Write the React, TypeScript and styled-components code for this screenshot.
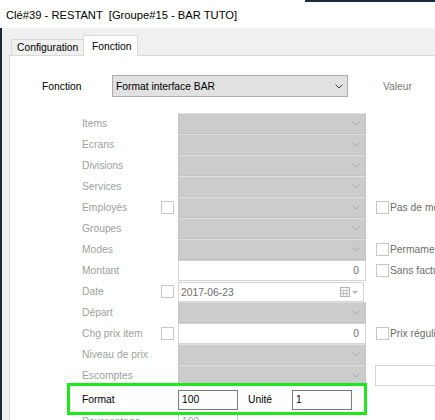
import React from "react";
import styled, { createGlobalStyle } from "styled-components";

const Global = createGlobalStyle`
  html, body { margin: 0; padding: 0; background: #f0f0f0; }
  body { font-family: "Liberation Sans", Arial, sans-serif; }
`;

const Window = styled.div`
  position: relative;
  width: 435px;
  height: 420px;
  overflow: hidden;
  display: flex;
  flex-direction: column;
  background: #f0f0f0;
`;

const TitleBar = styled.div`
  flex: none;
  height: 28px;
  box-sizing: border-box;
  padding: 2px 0 0 6px;
  display: flex;
  align-items: center;
  background: linear-gradient(#1e2c3c, #1e2c3c) no-repeat right top / 130px 2px, #ffffff;
  font-size: 11.2px;
  color: #000;
  white-space: pre;
`;

const Body = styled.div`
  flex: 1;
  display: flex;
  flex-direction: column;
  border-left: 2px solid #1b2838;
  padding: 7px 0 0 7px;
  min-height: 0;
`;

const TabStrip = styled.div`
  flex: none;
  display: flex;
  align-items: flex-end;
  height: 20px;
  padding-left: 2px;
  position: relative;
  z-index: 1;
`;

const Tab = styled.div<{ $active?: boolean }>`
  box-sizing: border-box;
  display: flex;
  align-items: center;
  font-size: 10.3px;
  color: #000;
  border: 1px solid #d9d9d9;
  border-bottom: none;
  ${(p) =>
    p.$active
      ? `height: 21px; margin-bottom: -1px; width: 55px; padding-left: 8px; background: #fff;`
      : `height: 16px; width: 72px; padding-left: 5px; background: #f0f0f0; border-right: none;`}
`;

const Panel = styled.div`
  flex: 1;
  background: #fff;
  border-top: 1px solid #d9d9d9;
  border-left: 1px solid #d9d9d9;
  display: flex;
  flex-direction: column;
  font-size: 10.3px;
  min-height: 0;
`;

const FonctionRow = styled.div`
  margin-top: 19px;
  padding-left: 32px;
  height: 22px;
  display: flex;
  align-items: center;
  white-space: nowrap;
`;

const FonctionLabel = styled.span`
  width: 70px;
  color: #000;
`;

const MainSelect = styled.div`
  box-sizing: border-box;
  width: 236px;
  height: 22px;
  background: #e1e1e1;
  border: 1px solid #adadad;
  display: flex;
  align-items: center;
  justify-content: space-between;
  padding: 0 4px 0 3px;
  color: #000;
`;

const Valeur = styled.span`
  margin-left: 35px;
  color: #7a7a7a;
`;

const Rows = styled.div`
  margin-top: 16px;
  padding-left: 72px;
  display: flex;
  flex-direction: column;
`;

const Row = styled.div<{ $top?: number }>`
  display: grid;
  grid-template-columns: 79px 17px 188px 10px 14px auto;
  height: 21px;
  align-items: center;
  white-space: nowrap;
  margin-top: ${(p) => p.$top ?? 0}px;
`;

const Label = styled.span<{ $on?: boolean }>`
  grid-column: 1;
  color: ${(p) => (p.$on ? "#000" : "#a0a0a0")};
`;

const Check = styled.span<{ $col: number }>`
  grid-column: ${(p) => p.$col};
  box-sizing: border-box;
  width: 13px;
  height: 13px;
  background: #fff;
  border: 1px solid #c6c6c6;
`;

const Combo = styled.div`
  grid-column: 3;
  align-self: stretch;
  box-sizing: border-box;
  background: #cccccc;
  border: 1px solid #c2c2c2;
  border-top-color: #dedede;
  display: flex;
  align-items: center;
  justify-content: flex-end;
  padding-right: 5px;
`;

const TextBox = styled.div`
  grid-column: 3;
  align-self: stretch;
  box-sizing: border-box;
  background: #fff;
  border: 1px solid #d4d4d4;
  display: flex;
  align-items: center;
  justify-content: flex-end;
  padding-right: 6px;
  color: #6d6d6d;
`;

const DateBox = styled.div`
  grid-column: 3;
  align-self: stretch;
  margin: 1px 2px 0 0;
  box-sizing: border-box;
  background: #fff;
  border: 1px solid #d4d4d4;
  display: flex;
  align-items: center;
  justify-content: space-between;
  padding: 0 4px 0 2px;
  color: #6d6d6d;
`;

const RightText = styled.span`
  grid-column: 6;
  color: #6d6d6d;
  overflow: hidden;
`;

const RightBox = styled.div`
  grid-column: 5 / 7;
  align-self: stretch;
  margin-left: -1px;
  width: 80px;
  box-sizing: border-box;
  background: #fff;
  border: 1px solid #d4d4d4;
`;

const FieldGroup = styled.div`
  grid-column: 3 / 7;
  display: flex;
  align-items: center;
`;

const EditBox = styled.div<{ $dim?: boolean }>`
  box-sizing: border-box;
  width: 60px;
  height: 20px;
  background: #fff;
  border: 1px solid ${(p) => (p.$dim ? "#cfcfcf" : "#7a7a7a")};
  display: flex;
  align-items: center;
  padding-left: 3px;
  color: ${(p) => (p.$dim ? "#a0a0a0" : "#000")};
`;

const InlineLabel = styled.span`
  width: 44px;
  margin-left: 10px;
  color: #000;
`;

const Highlight = styled.div`
  position: absolute;
  left: 67px;
  top: 383px;
  width: 300px;
  height: 32px;
  box-sizing: border-box;
  border: 3px solid #1de81d;
  pointer-events: none;
`;

const Chevron = ({ color }: { color: string }) => (
  <svg width="8" height="5" viewBox="0 0 8 5">
    <polyline points="0.5,0.5 4,4 7.5,0.5" fill="none" stroke={color} strokeWidth="1" />
  </svg>
);

const CalendarIcon = () => (
  <svg width="19" height="10" viewBox="0 0 19 10">
    <rect x="0.5" y="0.5" width="9" height="9" fill="#f4f4f4" stroke="#b4b4b4" />
    <line x1="0.5" y1="3.5" x2="9.5" y2="3.5" stroke="#c4c4c4" />
    <line x1="0.5" y1="6.5" x2="9.5" y2="6.5" stroke="#c4c4c4" />
    <line x1="3.5" y1="3.5" x2="3.5" y2="9.5" stroke="#c4c4c4" />
    <line x1="6.5" y1="3.5" x2="6.5" y2="9.5" stroke="#c4c4c4" />
    <polygon points="12,4 18,4 15,7" fill="#b4b4b4" />
  </svg>
);

type RowDef = {
  label: string;
  kind: "combo" | "text" | "date";
  chk?: boolean;
  value?: string;
  right?: string;
  rightBox?: boolean;
};

const rows: RowDef[] = [
  { label: "Items", kind: "combo" },
  { label: "Ecrans", kind: "combo" },
  { label: "Divisions", kind: "combo" },
  { label: "Services", kind: "combo" },
  { label: "Employés", kind: "combo", chk: true, right: "Pas de monnaie" },
  { label: "Groupes", kind: "combo" },
  { label: "Modes", kind: "combo", right: "Permament" },
  { label: "Montant", kind: "text", value: "0", right: "Sans facture" },
  { label: "Date", kind: "date", chk: true, value: "2017-06-23" },
  { label: "Départ", kind: "combo" },
  { label: "Chg prix item", kind: "text", chk: true, value: "0", right: "Prix régulier" },
  { label: "Niveau de prix", kind: "combo" },
  { label: "Escomptes", kind: "combo", rightBox: true },
];

export default function App() {
  return (
    <>
      <Global />
      <Window>
        <TitleBar>Clé#39 - RESTANT  [Groupe#15 - BAR TUTO]</TitleBar>
        <Body>
          <TabStrip>
            <Tab>Configuration</Tab>
            <Tab $active>Fonction</Tab>
          </TabStrip>
          <Panel>
            <FonctionRow>
              <FonctionLabel>Fonction</FonctionLabel>
              <MainSelect>
                <span>Format interface BAR</span>
                <Chevron color="#404040" />
              </MainSelect>
              <Valeur>Valeur</Valeur>
            </FonctionRow>
            <Rows>
              {rows.map((r) => (
                <Row key={r.label}>
                  <Label>{r.label}</Label>
                  {r.chk && <Check $col={2} />}
                  {r.kind === "combo" && (
                    <Combo>
                      <Chevron color="#a9a9a9" />
                    </Combo>
                  )}
                  {r.kind === "text" && <TextBox>{r.value}</TextBox>}
                  {r.kind === "date" && (
                    <DateBox>
                      <span>{r.value}</span>
                      <CalendarIcon />
                    </DateBox>
                  )}
                  {r.right && (
                    <>
                      <Check $col={5} />
                      <RightText>{r.right}</RightText>
                    </>
                  )}
                  {r.rightBox && <RightBox />}
                </Row>
              ))}
              <Row $top={3}>
                <Label $on>Format</Label>
                <FieldGroup>
                  <EditBox>100</EditBox>
                  <InlineLabel>Unité</InlineLabel>
                  <EditBox>1</EditBox>
                </FieldGroup>
              </Row>
              <Row $top={1}>
                <Label>Pourcentage</Label>
                <FieldGroup>
                  <EditBox $dim>100</EditBox>
                </FieldGroup>
              </Row>
            </Rows>
          </Panel>
        </Body>
        <Highlight />
      </Window>
    </>
  );
}
